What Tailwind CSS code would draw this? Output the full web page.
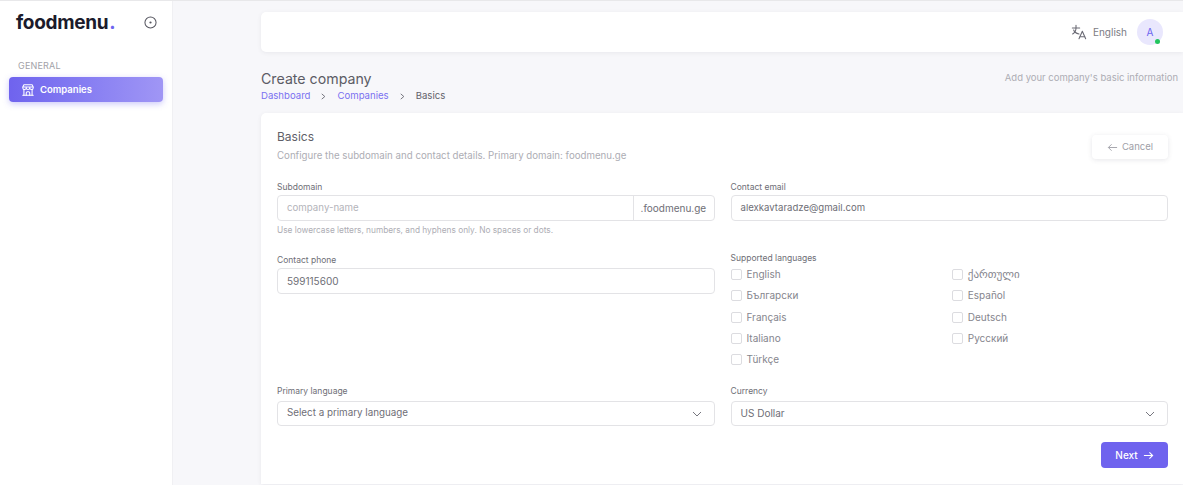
<!DOCTYPE html>
<html lang="en">
<head>
  <meta charset="UTF-8" />
  <title>Create company</title>
  <script src="https://cdn.jsdelivr.net/npm/@tailwindcss/browser@4"></script>
</head>
<body class="bg-[#f7f7fa] font-['Inter','Noto_Sans','DejaVu_Sans',sans-serif] overflow-hidden">
  <div class="flex h-[485px] w-[1183px] border-t border-[#e8e8ea] overflow-hidden">

    <!-- Sidebar -->
    <aside class="w-[173px] shrink-0 bg-white border-r border-[#f0f0f3]">
      <div class="flex items-center justify-between pl-[16px] pr-[15px] h-[42px]">
        <span class="text-[19px] leading-none font-bold tracking-[-0.3px] text-[#1b1b2b]">foodmenu<span class="ml-[1px] text-[#6c63f0]">.</span></span>
        <svg class="w-[13px] h-[13px] text-[#55555f]" viewBox="0 0 14 14" fill="none" stroke="currentColor" stroke-width="1.1"><circle cx="7" cy="7" r="6"/><circle cx="7" cy="7" r="1.2" fill="currentColor" stroke="none"/></svg>
      </div>
      <div class="px-[18px] mt-[17px] text-[9px] leading-[11px] tracking-[0.2px] text-[#a2a2a8]">GENERAL</div>
      <a class="mx-[9px] mt-[6px] h-[25px] w-[154px] rounded-[4px] flex items-center gap-[5px] pl-[12px] pt-[1px] bg-gradient-to-r from-[#6f63ee] to-[#a096f5] shadow-[0_2px_6px_rgba(108,99,240,0.35)] text-white text-[9.5px] font-semibold">
        <svg class="w-[14px] h-[14px]" viewBox="0 0 24 24" fill="none" stroke="currentColor" stroke-width="1.8" stroke-linecap="round" stroke-linejoin="round"><path d="M3 21h18"/><path d="M3 7v1a3 3 0 0 0 6 0V7m0 1a3 3 0 0 0 6 0V7m0 1a3 3 0 0 0 6 0V7H3l2-4h14l2 4"/><path d="M5 21V10.85"/><path d="M19 21V10.85"/><path d="M9 21v-4a2 2 0 0 1 2-2h2a2 2 0 0 1 2 2v4"/></svg>
        Companies
      </a>
    </aside>

    <!-- Main -->
    <main class="flex-1 pl-[88px]">
      <header class="mt-[11px] h-[40px] bg-white rounded-l-[5px] shadow-[0_1px_4px_rgba(60,60,80,0.08)] flex items-center justify-end pr-[20px]">
        <svg class="w-[16px] h-[16px] text-[#6a6a74] mr-[6px]" viewBox="0 0 24 24" fill="none" stroke="currentColor" stroke-width="1.6" stroke-linecap="round" stroke-linejoin="round"><path d="M2 6h11"/><path d="M7.500 2v4c0 4-2 7-5 9"/><path d="M4 9c1 3 4 5 8 6"/><path d="M12 22l5-11 5 11"/><path d="M20.500 19h-7"/></svg>
        <span class="text-[10px] text-[#7c7c84] mr-[10px]">English</span>
        <div class="relative w-[26px] h-[26px] rounded-full bg-[#e9e7fd] flex items-center justify-center text-[10px] text-[#6c63f0]">
          A
          <span class="absolute right-[3px] bottom-[1px] w-[5px] h-[5px] rounded-full bg-[#22c55e]"></span>
        </div>
      </header>

      <div class="flex justify-between mt-[18px] pr-[5px]">
        <div>
          <h1 class="text-[14.2px] leading-[18px] text-[#5c5c65]">Create company</h1>
          <nav class="flex items-center text-[9.6px] leading-[14px] mt-[1px]">
            <span class="text-[#7a71f1]">Dashboard</span>
            <svg class="w-[7px] h-[7px] mx-[10px] text-[#66666e]" viewBox="0 0 8 8" fill="none" stroke="currentColor" stroke-width="1"><path d="M2 1l3.500 3L2 7"/></svg>
            <span class="text-[#7a71f1]">Companies</span>
            <svg class="w-[7px] h-[7px] mx-[10px] text-[#66666e]" viewBox="0 0 8 8" fill="none" stroke="currentColor" stroke-width="1"><path d="M2 1l3.500 3L2 7"/></svg>
            <span class="text-[#62626a]">Basics</span>
          </nav>
        </div>
        <p class="text-[9.5px] leading-[14px] mt-[1px] text-[#adadb4]">Add your company's basic information</p>
      </div>

      <!-- Card -->
      <section class="mt-[10px] h-[371px] bg-white rounded-tl-[5px] shadow-[0_1px_4px_rgba(60,60,80,0.08)] pl-[16px] pr-[15px] pt-[16px]">
        <div class="flex justify-between">
          <div>
            <h2 class="text-[12px] leading-[15px] text-[#5f5f68]">Basics</h2>
            <p class="text-[9.7px] leading-[13px] mt-[5px] text-[#adadb4]">Configure the subdomain and contact details. Primary domain: foodmenu.ge</p>
          </div>
          <button class="h-[24px] w-[76px] mt-[6px] rounded-[4px] bg-white shadow-[0_1px_5px_rgba(60,60,80,0.12)] flex items-center justify-center gap-[4px] text-[9.5px] text-[#a0a0a7]">
            <svg class="w-[11px] h-[11px]" viewBox="0 0 12 12" fill="none" stroke="currentColor" stroke-width="1"><path d="M11 6H1.500M5 2.500L1.500 6 5 9.500"/></svg>
            Cancel
          </button>
        </div>

        <div class="grid grid-cols-2 gap-x-[16px] mt-[20px]">
          <!-- left column -->
          <div>
            <label class="block text-[8.5px] leading-[11px] text-[#6e6e76]">Subdomain</label>
            <div class="flex mt-[2px] h-[26px] border border-[#e3e3e6] rounded-[4px] text-[9.7px]">
              <div class="flex-1 flex items-center pl-[9px] text-[#b4b4ba]">company-name</div>
              <div class="w-[81px] flex items-center pl-[7px] border-l border-[#e3e3e6] text-[10px] text-[#6e6e76]">.foodmenu.ge</div>
            </div>
            <p class="mt-[4px] text-[8.3px] leading-[11px] text-[#adadb4]">Use lowercase letters, numbers, and hyphens only. No spaces or dots.</p>
            <label class="block mt-[19px] text-[8.5px] leading-[11px] text-[#6e6e76]">Contact phone</label>
            <div class="flex items-center mt-[2px] h-[26px] border border-[#e3e3e6] rounded-[4px] pl-[9px] text-[10px] text-[#6e6e76]">599115600</div>
          </div>
          <!-- right column -->
          <div>
            <label class="block text-[8.5px] leading-[11px] text-[#6e6e76]">Contact email</label>
            <div class="flex items-center mt-[2px] h-[26px] border border-[#e3e3e6] rounded-[4px] pl-[9px] text-[9.6px] text-[#6e6e76]">alexkavtaradze@gmail.com</div>
            <label class="block mt-[32px] text-[8.5px] leading-[11px] text-[#6e6e76]">Supported languages</label>
            <div class="grid grid-cols-2 gap-x-[5px] auto-rows-[21.25px] text-[10px] text-[#85858d]">
              <div class="flex items-center gap-[5px]"><span class="w-[11px] h-[11px] border border-[#dcdce0] rounded-[2px]"></span>English</div>
              <div class="flex items-center gap-[5px]"><span class="w-[11px] h-[11px] border border-[#dcdce0] rounded-[2px]"></span><span class="text-[11px]">ქართული</span></div>
              <div class="flex items-center gap-[5px]"><span class="w-[11px] h-[11px] border border-[#dcdce0] rounded-[2px]"></span>Български</div>
              <div class="flex items-center gap-[5px]"><span class="w-[11px] h-[11px] border border-[#dcdce0] rounded-[2px]"></span>Español</div>
              <div class="flex items-center gap-[5px]"><span class="w-[11px] h-[11px] border border-[#dcdce0] rounded-[2px]"></span>Français</div>
              <div class="flex items-center gap-[5px]"><span class="w-[11px] h-[11px] border border-[#dcdce0] rounded-[2px]"></span>Deutsch</div>
              <div class="flex items-center gap-[5px]"><span class="w-[11px] h-[11px] border border-[#dcdce0] rounded-[2px]"></span>Italiano</div>
              <div class="flex items-center gap-[5px]"><span class="w-[11px] h-[11px] border border-[#dcdce0] rounded-[2px]"></span>Русский</div>
              <div class="flex items-center gap-[5px]"><span class="w-[11px] h-[11px] border border-[#dcdce0] rounded-[2px]"></span>Türkçe</div>
            </div>
          </div>
        </div>

        <div class="grid grid-cols-2 gap-x-[16px] mt-[16px]">
          <div>
            <label class="block text-[8.5px] leading-[11px] text-[#6e6e76]">Primary language</label>
            <div class="flex items-center justify-between mt-[4px] h-[25px] border border-[#e3e3e6] rounded-[4px] pl-[9px] pr-[12px] text-[9.8px] text-[#6e6e76]">
              Select a primary language
              <svg class="w-[10px] h-[10px] text-[#77777f]" viewBox="0 0 10 10" fill="none" stroke="currentColor" stroke-width="1"><path d="M1 3l4 4 4-4"/></svg>
            </div>
          </div>
          <div>
            <label class="block text-[8.5px] leading-[11px] text-[#6e6e76]">Currency</label>
            <div class="flex items-center justify-between mt-[4px] h-[25px] border border-[#e3e3e6] rounded-[4px] pl-[9px] pr-[12px] text-[10px] text-[#6e6e76]">
              US Dollar
              <svg class="w-[10px] h-[10px] text-[#77777f]" viewBox="0 0 10 10" fill="none" stroke="currentColor" stroke-width="1"><path d="M1 3l4 4 4-4"/></svg>
            </div>
          </div>
        </div>

        <div class="flex justify-end mt-[16px]">
          <button class="h-[26px] w-[67px] rounded-[4px] bg-[#6f63ee] flex items-center justify-center gap-[5px] text-[10px] font-medium text-white">
            Next
            <svg class="w-[11px] h-[11px]" viewBox="0 0 12 12" fill="none" stroke="currentColor" stroke-width="1.2"><path d="M1 6h9.500M7 2.500L10.500 6 7 9.500"/></svg>
          </button>
        </div>
      </section>
    </main>
  </div>
</body>
</html>
